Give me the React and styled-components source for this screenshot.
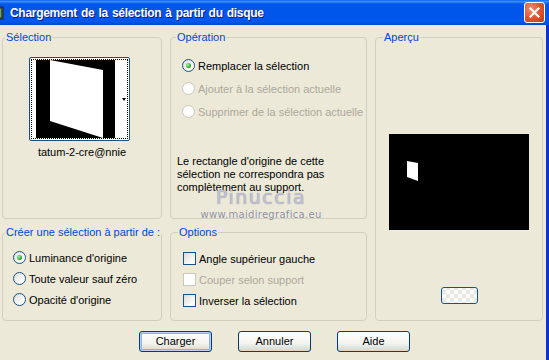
import React from "react";
import styled, { createGlobalStyle } from "styled-components";

const GlobalStyle = createGlobalStyle`
  body {
    margin: 0;
    background: #ece9d8;
  }
`;

const Window = styled.div`
  position: relative;
  width: 549px;
  height: 360px;
  display: flex;
  flex-direction: column;
  background: #ece9d8;
  overflow: hidden;
  font-family: "Liberation Sans", Arial, sans-serif;
  font-size: 11px;
  color: #000;
`;

const TitleBar = styled.div`
  height: 25px;
  flex: none;
  display: flex;
  align-items: center;
  padding-right: 4px;
  background: linear-gradient(
    #0a66f0 0%,
    #3d8cf6 6%,
    #0058ee 16%,
    #0054e8 50%,
    #0058ee 85%,
    #0049d0 100%
  );
`;

const TitleIcon = styled.svg`
  width: 16px;
  height: 16px;
  margin-left: -12px;
  flex: none;
`;

const TitleText = styled.div`
  margin-left: 6px;
  color: #fff;
  font-family: "Liberation Sans", Arial, sans-serif;
  font-size: 12px;
  font-weight: bold;
  letter-spacing: -0.3px;
  word-spacing: 1px;
  text-shadow: 1px 1px 0 #0a1883;
`;

const CloseButton = styled.div`
  margin-left: auto;
  width: 21px;
  height: 21px;
  box-sizing: border-box;
  border: 1px solid #fff;
  border-radius: 3px;
  background: radial-gradient(circle at 30% 30%, #f08a66, #e0502b 55%, #c33a17);
  display: flex;
  align-items: center;
  justify-content: center;
`;

const Body = styled.div`
  flex: 1;
  display: flex;
  flex-direction: column;
  padding: 6px 3px 0 2px;
  border-right: 3px solid #0831d9;
`;

const Grid = styled.div`
  display: grid;
  grid-template-columns: 160px 197px 168px;
  grid-template-rows: 188px 95px;
  gap: 7px 8px;
`;

const Group = styled.fieldset`
  margin: 0;
  padding: 0;
  min-width: 0;
  border: 1px solid #d0d0bf;
  border-radius: 4px;
  display: flex;
  flex-direction: column;
  align-items: ${(p) => (p.$center ? "center" : "stretch")};
  grid-row: ${(p) => p.$rows || "auto"};
  grid-column: ${(p) => p.$col || "auto"};
`;

const Legend = styled.legend`
  margin-left: ${(p) => p.$indent || 2}px;
  padding: 0 1px;
  line-height: 13px;
  font-size: 11px;
  white-space: nowrap;
  color: #0046d5;
`;

const Thumb = styled.div`
  width: 101px;
  height: 84px;
  box-sizing: border-box;
  margin: 13px 5px 0 0;
  border: 1px solid #1c5180;
  border-radius: 2px;
  background: #fff;
  padding: 1px;
  display: flex;
`;

const Focus = styled.div`
  flex: 1;
  border: 1px dotted #000;
  display: flex;
  align-items: center;
  padding-left: 4px;
`;

const Arrow = styled.span`
  margin-left: 7px;
  width: 0;
  height: 0;
  border-left: 2.5px solid transparent;
  border-right: 2.5px solid transparent;
  border-top: 3px solid #000;
`;

const Caption = styled.div`
  margin-top: 5px;
  line-height: 13px;
`;

const Options = styled.div`
  display: flex;
  flex-direction: column;
  padding: ${(p) => p.$pad};
`;

const Row = styled.div`
  height: ${(p) => p.$h}px;
  display: flex;
  align-items: center;
  gap: 3px;
  white-space: nowrap;
  color: ${(p) => (p.$disabled ? "#aca899" : "#000")};
`;

const Radio = styled.span`
  width: 13px;
  height: 13px;
  box-sizing: border-box;
  border-radius: 50%;
  border: 1px solid ${(p) => (p.$disabled ? "#cac8bb" : "#1c5180")};
  background: ${(p) =>
    p.$disabled ? "#fff" : "linear-gradient(135deg, #dcdcd7, #fff 80%)"};
  display: flex;
  align-items: center;
  justify-content: center;
  flex: none;
  &::after {
    content: "";
    display: ${(p) => (p.$checked ? "block" : "none")};
    width: 5px;
    height: 5px;
    border-radius: 50%;
    background: radial-gradient(circle at 35% 35%, #a8eea0, #21a121 70%);
  }
`;

const Check = styled.span`
  width: 13px;
  height: 13px;
  box-sizing: border-box;
  border: 1px solid ${(p) => (p.$disabled ? "#cac8bb" : "#1c5180")};
  background: ${(p) =>
    p.$disabled ? "#fff" : "linear-gradient(135deg, #dcdcd7, #fff 85%)"};
  flex: none;
`;

const Note = styled.div`
  margin: 32px 0 0 6px;
  line-height: 13px;
`;

const Preview = styled.div`
  width: 140px;
  height: 96px;
  margin-top: 90px;
  background: #000;
  align-self: center;
`;

const Swatch = styled.div`
  width: 37px;
  height: 17px;
  box-sizing: border-box;
  margin-top: 57px;
  align-self: center;
  border: 1px solid #1c5180;
  border-radius: 3px;
  background-color: #f4f4f2;
  background-image: repeating-conic-gradient(#e8e8e6 0 25%, #fbfbfa 0 50%);
  background-size: 8px 8px;
  background-position: 4px 2px;
`;

const ButtonRow = styled.div`
  display: flex;
  justify-content: center;
  gap: 26px;
  margin-top: 10px;
  padding-left: 4px;
`;

const Button = styled.div`
  width: 73px;
  height: 21px;
  box-sizing: border-box;
  border: 1px solid #003c74;
  border-radius: 3px;
  background: linear-gradient(#ffffff, #f4f3ee 60%, #d9d5c8);
  box-shadow: ${(p) =>
    p.$default ? "inset 0 0 0 1px #b9d1f6, inset 0 0 0 2px #8fb1e8" : "none"};
  display: flex;
  align-items: center;
  justify-content: center;
  line-height: 13px;
`;

const Watermark = styled.div`
  position: absolute;
  left: 198px;
  top: 188px;
  width: 126px;
  display: flex;
  flex-direction: column;
  align-items: center;
  pointer-events: none;
  font-family: "DejaVu Sans", sans-serif;
`;

const WmName = styled.div`
  font-size: 19px;
  line-height: 19px;
  letter-spacing: 1.5px;
  color: #c2c1d4;
  text-shadow: 0 0 1px #7a7a90;
`;

const WmSite = styled.div`
  margin-top: 2px;
  font-size: 10px;
  line-height: 12px;
  letter-spacing: 0.3px;
  color: #8c8c98;
  text-shadow: 0 0 1px #fff;
`;

function RadioRow({ label, checked, disabled, h }) {
  return (
    <Row $h={h} $disabled={disabled}>
      <Radio $checked={checked} $disabled={disabled} />
      {label}
    </Row>
  );
}

function CheckRow({ label, disabled, h }) {
  return (
    <Row $h={h} $disabled={disabled}>
      <Check $disabled={disabled} />
      {label}
    </Row>
  );
}

export default function App() {
  return (
    <Window>
      <GlobalStyle />
      <TitleBar>
        <TitleIcon viewBox="0 0 16 16">
          <rect x="1" y="2" width="14" height="12" fill="#3c5a3c" stroke="#222" />
          <rect x="3" y="4" width="10" height="8" fill="#7aa06a" />
        </TitleIcon>
        <TitleText>Chargement de la sélection à partir du disque</TitleText>
        <CloseButton>
          <svg width="11" height="11" viewBox="0 0 11 11">
            <path d="M1.5 1.5 L9.5 9.5 M9.5 1.5 L1.5 9.5" stroke="#fff" strokeWidth="2.2" strokeLinecap="square" />
          </svg>
        </CloseButton>
      </TitleBar>
      <Body>
        <Grid>
          <Group $center>
            <Legend $indent={2}>Sélection</Legend>
            <Thumb>
              <Focus>
                <svg width="79" height="78" viewBox="0 0 79 78">
                  <rect width="79" height="78" fill="#000" />
                  <polygon points="14,0 67,10 67,78 14,61" fill="#fff" />
                </svg>
                <Arrow />
              </Focus>
            </Thumb>
            <Caption>tatum-2-cre@nnie</Caption>
          </Group>

          <Group>
            <Legend $indent={5}>Opération</Legend>
            <Options $pad="10px 0 0 11px">
              <RadioRow h={23} checked label="Remplacer la sélection" />
              <RadioRow h={23} disabled label="Ajouter à la sélection actuelle" />
              <RadioRow h={23} disabled label="Supprimer de la sélection actuelle" />
            </Options>
            <Note>
              Le rectangle d'origine de cette
              <br />
              sélection ne correspondra pas
              <br />
              complètement au support.
            </Note>
          </Group>

          <Group $rows="1 / span 2" $col="3">
            <Legend $indent={7}>Aperçu</Legend>
            <Preview>
              <svg width="140" height="96" viewBox="0 0 140 96">
                <polygon points="18,27 29,29 29,47 18,43" fill="#fff" />
              </svg>
            </Preview>
            <Swatch />
          </Group>

          <Group>
            <Legend $indent={2}>Créer une sélection à partir de :</Legend>
            <Options $pad="8px 0 0 10px">
              <RadioRow h={21} checked label="Luminance d'origine" />
              <RadioRow h={21} label="Toute valeur sauf zéro" />
              <RadioRow h={21} label="Opacité d'origine" />
            </Options>
          </Group>

          <Group>
            <Legend $indent={7}>Options</Legend>
            <Options $pad="9px 0 0 12px">
              <CheckRow h={21} label="Angle supérieur gauche" />
              <CheckRow h={21} disabled label="Couper selon support" />
              <CheckRow h={21} label="Inverser la sélection" />
            </Options>
          </Group>
        </Grid>
        <ButtonRow>
          <Button $default>Charger</Button>
          <Button>Annuler</Button>
          <Button>Aide</Button>
        </ButtonRow>
      </Body>
      <Watermark>
        <WmName>Pinuccia</WmName>
        <WmSite>www.maidiregrafica.eu</WmSite>
      </Watermark>
    </Window>
  );
}
